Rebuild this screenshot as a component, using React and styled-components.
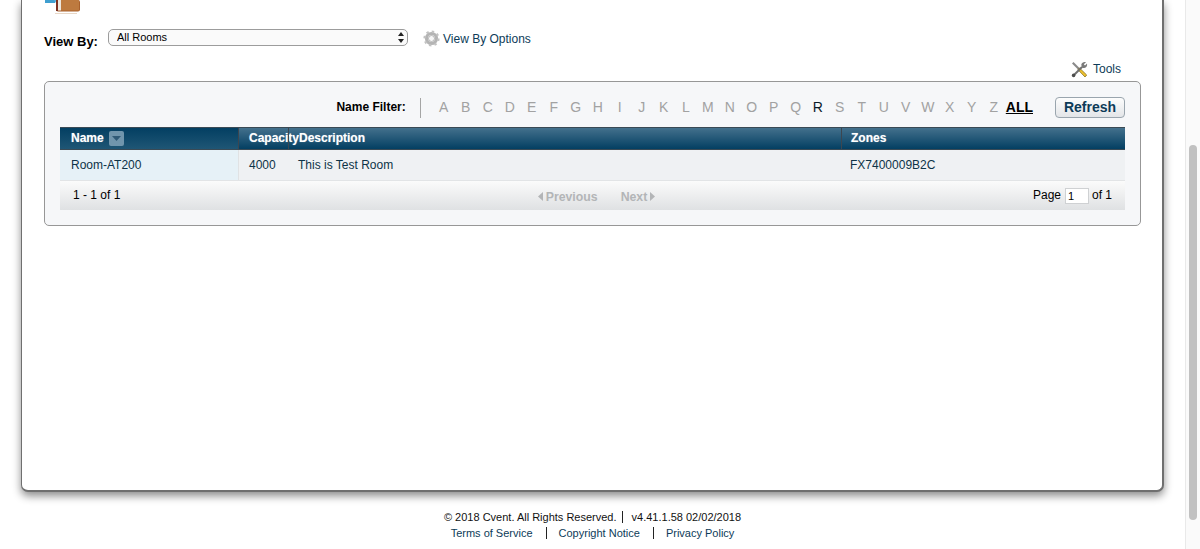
import React from "react";
import styled, { createGlobalStyle } from "styled-components";

const Global = createGlobalStyle`
  html, body { margin: 0; padding: 0; height: 549px; overflow: hidden; background: #fff; }
  body { font-family: "Liberation Sans", Arial, sans-serif; font-size: 12px; color: #000; }
`;
const Page = styled.div`display: flex; height: 549px; width: 1200px; overflow: hidden;`;
const Main = styled.div`flex: 1; min-width: 0; display: flex; flex-direction: column;`;
const Track = styled.div`
  width: 15px; box-sizing: border-box; background: #fafafa;
  border-left: 1px solid #e9e9e9; padding: 145px 3px 0 3px;
`;
const Thumb = styled.div`width: 8px; height: 375px; border-radius: 4px; background: #c1c1c1;`;
const Sheet = styled.div`
  box-sizing: border-box; height: 492px; margin: 0 21px; padding: 0 21px 0 22px;
  background: #fff; border: 1px solid #6f6f6f; border-width: 0 2px 2px 1px;
  border-radius: 0 0 7px 7px; box-shadow: 0 4px 8px rgba(0,0,0,.45);
  display: flex; flex-direction: column;
`;
const IconRow = styled.div`height: 14px; line-height: 0; padding-left: 1px;`;
const ViewRow = styled.div`display: flex; align-items: center; height: 33px; margin-top: 8px;`;
const ViewLabel = styled.label`font-weight: bold; font-size: 13px; width: 64px; margin-top: 5px;`;
const SelectWrap = styled.div`position: relative; width: 300px; height: 17px; margin-top: -3px;`;
const Select = styled.select`
  appearance: none; width: 100%; height: 100%; box-sizing: border-box; padding: 0 0 0 8px;
  border: 1px solid #9c9c9c; border-radius: 5px; background: #fafafa; color: #000;
  font: 11px "Liberation Sans", Arial, sans-serif; outline: 0;
`;
const Arrows = styled.svg`position: absolute; right: 4px; top: 3px; pointer-events: none;`;
const OptionsLink = styled.a`
  display: flex; align-items: center; gap: 3px; margin-left: 15px; color: #0d3b58; font-size: 12px;
`;
const ToolsRow = styled.div`
  display: flex; justify-content: flex-end; align-items: center; gap: 5px; height: 18px;
  margin-top: 5px; padding-right: 20px; color: #0d3b58; font-size: 12px;
`;
const Panel = styled.div`
  box-sizing: border-box; height: 145px; margin-top: 3px; padding: 15px 15px 0;
  background: #f6f7f9; border: 1px solid #979797; border-radius: 5px;
`;
const FilterRow = styled.div`display: flex; justify-content: flex-end; align-items: center; height: 21px;`;
const FilterLabel = styled.span`font-weight: bold; font-size: 12px; padding-bottom: 2px;`;
const FilterDivider = styled.span`width: 1px; height: 20px; background: #a5a5a5; margin: 0 12px 0 14px;`;
const Letter = styled.span`
  width: 22px; text-align: center; font-size: 14px; padding-bottom: 2px;
  color: ${p => (p.$on ? "#0a1a28" : "#a2a2a2")};
`;
const AllLink = styled.a`
  font-weight: bold; font-size: 14px; color: #000; text-decoration: underline; margin-left: 1px; padding-bottom: 2px;
`;
const RefreshButton = styled.button`
  box-sizing: border-box; width: 70px; height: 21px; margin-left: 22px; padding: 0 0 2px;
  border: 1px solid #9aa5ae; border-radius: 4px; color: #0d3b58;
  background: linear-gradient(#fdfdfd, #e3e5e8);
  font: bold 14px "Liberation Sans", Arial, sans-serif;
`;
const cols = "178px 50px 553px 1fr";
const HeadRow = styled.div`
  display: grid; grid-template-columns: ${cols}; height: 23px; margin-top: 9px; box-sizing: border-box;
  background: linear-gradient(#43708c, #033f62);
  border-top: 1px solid #3a4a55; border-bottom: 1px solid #3a4a55;
`;
const HeadCell = styled.div`
  display: flex; align-items: center; gap: 5px; white-space: nowrap;
  padding-left: ${p => p.$pad || 10}px; padding-bottom: 2px; font-weight: bold; font-size: 12px; color: #fff;
  border-left: ${p => (p.$first ? "0" : "1px solid #3c4650")};
  background: ${p => (p.$dark ? "linear-gradient(#033f62, #1f5675)" : "none")};
  text-shadow: 0 0 1px rgba(255,255,255,.5);
`;
const SortBox = styled.span`
  width: 15px; height: 15px; border-radius: 2px; background: #7095ac; margin-top: 2px;
  display: flex; align-items: center; justify-content: center;
`;
const BodyRow = styled.div`
  display: grid; grid-template-columns: ${cols}; height: 31px; box-sizing: border-box;
  background: #eff1f3; border-bottom: 1px solid #e2e4e6; color: #0d3347; font-size: 12px;
`;
const BodyCell = styled.div`
  display: flex; align-items: center; padding-left: ${p => p.$pad || 10}px;
  padding-bottom: 1px; white-space: nowrap;
  background: ${p => (p.$tint ? "#e6f1f7" : "none")};
  border-left: ${p => (p.$line ? "1px solid #e0e2e4" : "0")};
`;
const Pager = styled.div`
  display: grid; grid-template-columns: 1fr auto 1fr; align-items: center; height: 29px; box-sizing: border-box;
  padding: 0 13px 1px; background: linear-gradient(#fbfbfb, #dfe1e3); font-size: 12px;
`;
const PagerNav = styled.div`
  display: flex; align-items: center; gap: 23px; margin-left: 8px; padding-top: 3px;
  font-weight: bold; font-size: 12.3px; color: #b3b5b7;
`;
const NavItem = styled.span`display: flex; align-items: center; gap: 3px;`;
const PagerRight = styled.div`display: flex; justify-content: flex-end; align-items: center; gap: 4px;`;
const PageInput = styled.input`
  box-sizing: border-box; width: 24px; height: 16px; padding: 0 2px; background: #fff;
  border: 1px solid #cfd1d3; font: 11px "Liberation Sans", Arial, sans-serif; margin: 1px -1px 0 0;
`;
const Footer = styled.footer`
  display: flex; flex-direction: column; align-items: center; margin-top: 17px; font-size: 11px; line-height: 16px;
`;
const FootLine = styled.div`display: flex; align-items: center; color: #111;`;
const FootDivider = styled.span`
  width: 1px; height: 12px; background: #222; margin: 0 ${p => p.$gap}px 0 ${p => p.$left ?? p.$gap}px;
`;
const FootLink = styled.a`color: #0d3b58;`;

const RoomIcon = () => (
  <svg width="36" height="14" viewBox="0 0 36 14">
    <rect x="0" y="0" width="10" height="3" fill="#3f9fd0" />
    <path d="M9 0h4v6z" fill="#5ab2dd" />
    <rect x="11" y="0" width="24" height="11.5" rx="2" fill="#a8602c" />
    <rect x="11" y="0" width="2" height="11" fill="#7c2f20" />
    <rect x="13" y="0" width="3" height="10.5" fill="#ece6dd" />
    <rect x="16" y="0" width="18" height="10.5" fill="#bd7a3f" />
    <rect x="10" y="13" width="22" height="1" fill="#e8d7c6" />
  </svg>
);
const GearIcon = () => (
  <svg width="17" height="17" viewBox="0 0 17 17">
    <circle cx="8.5" cy="8.5" r="5" fill="none" stroke="#b4b4b4" strokeWidth="3.2" />
    <circle cx="8.5" cy="8.5" r="7" fill="none" stroke="#c2c2c2" strokeWidth="2.2" strokeDasharray="2.4 3.1" />
    <circle cx="8.5" cy="8.5" r="3" fill="#f6f6f6" stroke="#8f8f8f" strokeWidth=".6" />
  </svg>
);
const ToolsIcon = () => (
  <svg width="17" height="17" viewBox="0 0 17 17">
    <path d="M1 2.5 2.5 1 9 7.5 7.5 9z" fill="#8a8a8a" />
    <path d="M8.5 7 15.7 14 14 16 7 8.7z" fill="#eec22e" stroke="#7d6414" strokeWidth=".7" />
    <path d="M3 14 11 6" stroke="#6f6f6f" strokeWidth="2" />
    <path d="M10.3 3.5C10.8 1.5 13 .4 15 1.2l-2.2 2.1 1.2 1.2L16 2.4c.6 2-.6 4.2-2.7 4.6-1 .2-1.9 0-2.5-.5z" fill="#7a7a7a" />
    <circle cx="2.6" cy="14.4" r="1.8" fill="#4d4d4d" />
  </svg>
);
const Tri = ({ left, color = "#b3b5b7" }) => (
  <svg width="5" height="9" viewBox="0 0 5 9"><path d={left ? "M5 0v9L0 4.5z" : "M0 0v9l5-4.5z"} fill={color} /></svg>
);

const letters = "ABCDEFGHIJKLMNOPQRSTUVWXYZ".split("");

export default function App() {
  return (
    <Page>
      <Global />
      <Main>
        <Sheet>
          <IconRow><RoomIcon /></IconRow>
          <ViewRow>
            <ViewLabel>View By:</ViewLabel>
            <SelectWrap>
              <Select defaultValue="all"><option value="all">All Rooms</option></Select>
              <Arrows width="6" height="11" viewBox="0 0 6 11"><path d="M3 0l3 4H0zM3 11L0 7h6z" fill="#222" /></Arrows>
            </SelectWrap>
            <OptionsLink><GearIcon />View By Options</OptionsLink>
          </ViewRow>
          <ToolsRow><ToolsIcon />Tools</ToolsRow>
          <Panel>
            <FilterRow>
              <FilterLabel>Name Filter:</FilterLabel>
              <FilterDivider />
              {letters.map(l => <Letter key={l} $on={l === "R"}>{l}</Letter>)}
              <AllLink>ALL</AllLink>
              <RefreshButton>Refresh</RefreshButton>
            </FilterRow>
            <HeadRow>
              <HeadCell $first $dark $pad={11}>Name<SortBox><svg width="9" height="5" viewBox="0 0 9 5"><path d="M0 0h9L4.5 5z" fill="#2f5a76" /></svg></SortBox></HeadCell>
              <HeadCell>Capacity</HeadCell>
              <HeadCell>Description</HeadCell>
              <HeadCell $pad={9}>Zones</HeadCell>
            </HeadRow>
            <BodyRow>
              <BodyCell $tint $pad={11}>Room-AT200</BodyCell>
              <BodyCell $line>4000</BodyCell>
              <BodyCell>This is Test Room</BodyCell>
              <BodyCell $pad={9}>FX7400009B2C</BodyCell>
            </BodyRow>
            <Pager>
              <span>1 - 1 of 1</span>
              <PagerNav>
                <NavItem><Tri left />Previous</NavItem>
                <NavItem>Next<Tri /></NavItem>
              </PagerNav>
              <PagerRight>Page <PageInput defaultValue="1" /> of 1</PagerRight>
            </Pager>
          </Panel>
        </Sheet>
        <Footer>
          <FootLine>© 2018 Cvent. All Rights Reserved.<FootDivider $left={5} $gap={9} />v4.41.1.58 02/02/2018</FootLine>
          <FootLine>
            <FootLink>Terms of Service</FootLink><FootDivider $left={13} $gap={12} />
            <FootLink>Copyright Notice</FootLink><FootDivider $left={13} $gap={12} />
            <FootLink>Privacy Policy</FootLink>
          </FootLine>
        </Footer>
      </Main>
      <Track><Thumb /></Track>
    </Page>
  );
}
